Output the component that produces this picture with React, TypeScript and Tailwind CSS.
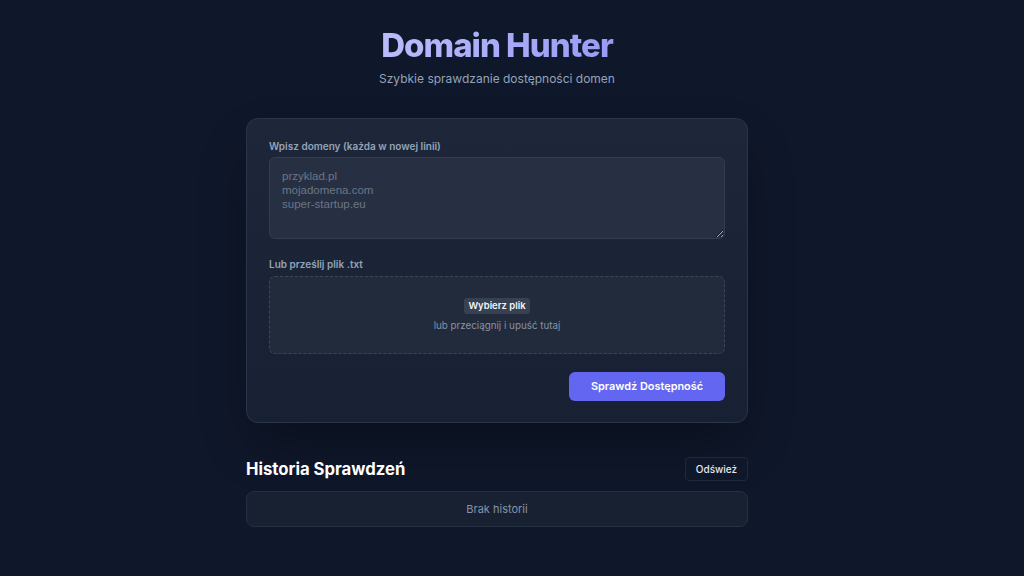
import { useState } from "react";

export default function App() {
  const [domains, setDomains] = useState("");

  return (
    <div
      className="min-h-screen bg-[#0f172a] pr-[30px] text-slate-100"
      style={{ fontFamily: "Inter, 'Noto Sans', sans-serif" }}
    >
      <div className="mx-auto w-[502px] pt-[26px] pb-12">
        {/* Header */}
        <header className="text-center">
          <h1 className="text-[33px] leading-[38px] font-extrabold tracking-[-0.03em] bg-gradient-to-r from-[#cdd0fb] to-[#8886f2] bg-clip-text text-transparent">
            Domain Hunter
          </h1>
          <p className="mt-[5px] text-[12px] leading-5 text-[#94a3b8]">
            Szybkie sprawdzanie dostępności domen
          </p>
        </header>

        {/* Form card */}
        <div className="mt-[29px] rounded-xl border border-[#2a3548] bg-gradient-to-b from-[#1e273a] to-[#182133] px-[22px] pt-[20px] pb-[21px] shadow-2xl shadow-black/40">
          <label className="block text-[10px] leading-[14px] font-semibold text-[#94a3b8]">
            Wpisz domeny (każda w nowej linii)
          </label>
          <textarea
            value={domains}
            onChange={(e) => setDomains(e.target.value)}
            placeholder={"przyklad.pl\nmojadomena.com\nsuper-startup.eu"}
            className="mt-[4px] block h-[82px] w-full resize-y rounded-md border border-[#323d51] bg-[#273042] px-3 pt-[11px] text-[11.5px] leading-[14px] text-slate-200 placeholder:text-[#6b7587] outline-none"
            style={{ fontFamily: "'Liberation Sans', Arial, sans-serif" }}
          />

          <label className="mt-[18px] block text-[10px] leading-[14px] font-semibold text-[#94a3b8]">
            Lub prześlij plik .txt
          </label>
          <div className="mt-[5px] flex h-[78px] flex-col items-center justify-center rounded-md border border-dashed border-[#3b4659] bg-[#222b3c]">
            <button className="rounded-[3px] bg-[#374151] px-[4px] py-[1px] text-[9.5px] leading-[14px] font-semibold text-slate-100">
              Wybierz plik
            </button>
            <p className="mt-[5px] text-[9.8px] leading-[14px] text-[#8892a4]">
              lub przeciągnij i upuść tutaj
            </p>
          </div>

          <div className="mt-[18px] flex justify-end">
            <button className="h-[29px] w-[156px] rounded-md bg-[#6366f1] text-[10.9px] font-semibold text-white">
              Sprawdź Dostępność
            </button>
          </div>
        </div>

        {/* History */}
        <div className="mt-[34px] flex items-center justify-between">
          <h2 className="text-[16.7px] leading-6 font-bold text-white">Historia Sprawdzeń</h2>
          <button className="h-[24px] w-[63px] rounded-[4px] border border-[#1f2937] bg-[#0f172a] text-[10px] font-medium text-slate-200">
            Odśwież
          </button>
        </div>
        <div className="mt-[10px] flex h-[36px] items-center justify-center rounded-lg border border-[#253043] bg-[#182132] text-[11px] text-[#8892a4]">
          Brak historii
        </div>
      </div>
    </div>
  );
}
